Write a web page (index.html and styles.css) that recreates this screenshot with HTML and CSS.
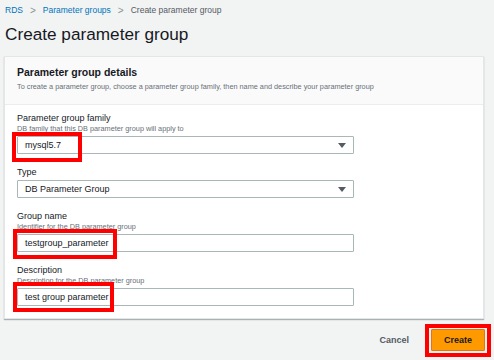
FILE: index.html
```html
<html>
    <head>
        <link rel="stylesheet" href="styles.css">
    </head>
    <body>
        <div class="crumbs">
            <a class="crumb-link">RDS</a>
            <span class="sep">&gt;</span>
            <a class="crumb-link">Parameter groups</a>
            <span class="sep">&gt;</span>
            <span class="crumb-current">Create parameter group</span>
        </div>

        <h1 class="page-title">Create parameter group</h1>

        <div class="card">
            <div class="card-head">
                <h2>Parameter group details</h2>
                <p>To create a parameter group, choose a parameter group family, then name and describe your parameter group</p>
            </div>
            <div class="card-body">
                <div class="field">
                    <div class="label">Parameter group family</div>
                    <div class="hint">DB family that this DB parameter group will apply to</div>
                    <div class="control select">
                        <span>mysql5.7</span>
                        <span class="caret"></span>
                        <div class="mark mark-family"></div>
                    </div>
                </div>
                <div class="field">
                    <div class="label">Type</div>
                    <div class="control select">
                        <span>DB Parameter Group</span>
                        <span class="caret"></span>
                    </div>
                </div>
                <div class="field">
                    <div class="label">Group name</div>
                    <div class="hint">Identifier for the DB parameter group</div>
                    <div class="control">
                        <span>testgroup_parameter</span>
                        <div class="mark mark-name"></div>
                    </div>
                </div>
                <div class="field">
                    <div class="label">Description</div>
                    <div class="hint">Description for the DB parameter group</div>
                    <div class="control">
                        <span>test group parameter</span>
                        <div class="mark mark-desc"></div>
                    </div>
                </div>
            </div>
        </div>

        <div class="actions">
            <button class="btn-cancel">Cancel</button>
            <button class="btn-create">Create<span class="mark mark-create"></span></button>
        </div>
    </body>
</html>
```

FILE: styles.css
```css
body {
    margin: 0;
    background: #f2f3f3;
    font-family: "Liberation Sans", Arial, sans-serif;
    color: #16191f;
}
.crumbs {
    height: 20px;
    padding-left: 5px;
    display: flex;
    align-items: center;
    font-size: 8.5px;
}
.crumb-link {
    color: #0073bb;
}
.sep {
    color: #879596;
    margin: 0 7px;
    font-size: 10px;
}
.crumb-current {
    color: #545b64;
}
.page-title {
    margin: 3px 0 0 5px;
    font-size: 17.2px;
    line-height: 22px;
    font-weight: normal;
    color: #16191f;
}
.card {
    margin: 11px 10px 0 4px;
    background: #fff;
    border: 1px solid #e4e7e7;
    box-shadow: 0 1px 1px rgba(0, 28, 36, 0.3);
}
.card-head {
    background: #fafafa;
    padding: 8px 12px 12px 12px;
    border-bottom: 1px solid #eaeded;
}
.card-head h2 {
    margin: 0;
    font-size: 10.5px;
    line-height: 15px;
    font-weight: bold;
}
.card-head p {
    margin: 2px 0 0 0;
    font-size: 7.3px;
    line-height: 10px;
    color: #687078;
}
.card-body {
    padding: 8px 12px 12px 12px;
}
.field {
    margin-bottom: 13px;
}
.field:last-child {
    margin-bottom: 0;
}
.label {
    font-size: 9px;
    line-height: 11px;
}
.hint {
    font-size: 7.3px;
    line-height: 10px;
    color: #687078;
}
.control {
    position: relative;
    margin-top: 2px;
    width: 328px;
    height: 16px;
    border: 1px solid #aab7b8;
    border-radius: 1px;
    display: flex;
    align-items: center;
    padding-left: 7px;
    font-size: 9px;
    box-sizing: content-box;
}
.select {
    justify-content: space-between;
}
.caret {
    width: 0;
    height: 0;
    border-left: 4px solid transparent;
    border-right: 4px solid transparent;
    border-top: 5px solid #545b64;
    margin-right: 7px;
}
.mark {
    position: absolute;
    border: 4px solid #f00;
    box-sizing: border-box;
}
.mark-family {
    left: -6px;
    top: -5px;
    width: 70px;
    height: 30px;
}
.mark-name {
    left: -5px;
    top: -6px;
    width: 104px;
    height: 30px;
}
.mark-desc {
    left: -5px;
    top: -7px;
    width: 101px;
    height: 30px;
}
.actions {
    display: flex;
    justify-content: flex-end;
    align-items: center;
    padding: 10px 9px 0 0;
}
.btn-cancel {
    background: none;
    border: none;
    font-family: inherit;
    font-size: 9px;
    font-weight: bold;
    color: #545b64;
    margin-right: 16px;
}
.btn-create {
    position: relative;
    width: 54px;
    height: 22px;
    background: #f90;
    border: 1px solid #ec7211;
    border-radius: 1px;
    font-family: inherit;
    font-size: 9px;
    font-weight: bold;
    color: #16191f;
}
.mark-create {
    left: -7px;
    top: -6px;
    width: 66px;
    height: 33px;
}
```
